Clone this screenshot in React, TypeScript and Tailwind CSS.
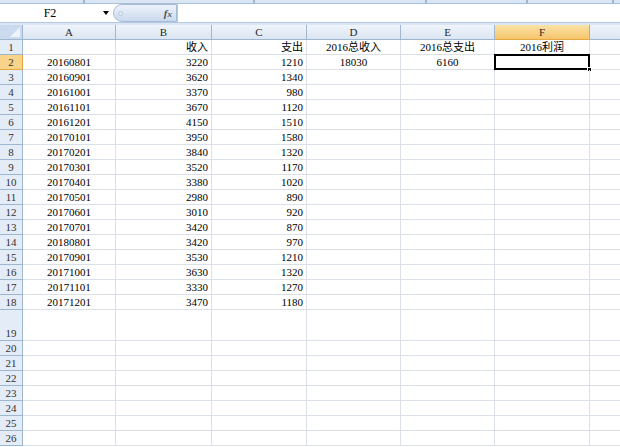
import React from 'react';

const cols = [
  { key: 'A', w: 'w-[93px]' },
  { key: 'B', w: 'w-[96px]' },
  { key: 'C', w: 'w-[95px]' },
  { key: 'D', w: 'w-[94px]' },
  { key: 'E', w: 'w-[94px]' },
  { key: 'F', w: 'w-[95px]' },
];

const data: string[][] = [
  ['', '收入', '支出', '2016总收入', '2016总支出', '2016利润'],
  ['20160801', '3220', '1210', '18030', '6160', ''],
  ['20160901', '3620', '1340'],
  ['20161001', '3370', '980'],
  ['20161101', '3670', '1120'],
  ['20161201', '4150', '1510'],
  ['20170101', '3950', '1580'],
  ['20170201', '3840', '1320'],
  ['20170301', '3520', '1170'],
  ['20170401', '3380', '1020'],
  ['20170501', '2980', '890'],
  ['20170601', '3010', '920'],
  ['20170701', '3420', '870'],
  ['20180801', '3420', '970'],
  ['20170901', '3530', '1210'],
  ['20171001', '3630', '1320'],
  ['20171101', '3330', '1270'],
  ['20171201', '3470', '1180'],
];

const font = { fontFamily: '"Liberation Serif", "Noto Sans CJK SC", serif' };

// B and C columns are right aligned, the rest centred
const align = ['justify-center', 'justify-end pr-[3px]', 'justify-end pr-[3px]', 'justify-center', 'justify-center', 'justify-center'];

const App: React.FC = () => {
  const rows = Array.from({ length: 26 }, (_, i) => i + 1);

  return (
    <div className="w-[620px] h-[447px] overflow-hidden bg-white text-[11px] text-black" style={font}>
      {/* ribbon remnants */}
      <div className="flex h-[4px] bg-[#dbe6f4] border-b border-[#a9bfd6]">
        <div className="w-[85px] border-r-2 border-[#9fb6cf]" />
        <div className="w-[170px] border-r-2 border-[#9fb6cf]" />
        <div className="w-[172px] border-r-2 border-[#9fb6cf]" />
        <div className="w-[101px] border-r-2 border-[#9fb6cf]" />
        <div className="w-[86px] border-r-2 border-[#9fb6cf]" />
      </div>

      {/* formula bar */}
      <div className="flex h-[19px] bg-white border-b border-[#b6c9e0]">
        <div className="relative flex w-[113px] items-center">
          <span className="w-[100px] text-center text-[12px]">F2</span>
          <span className="absolute left-[103px] top-[7px] h-0 w-0 border-x-[3px] border-t-[4px] border-x-transparent border-t-black" />
        </div>
        <div className="flex w-[64px] items-center justify-between rounded-l-full bg-gradient-to-b from-[#eef3fa] to-[#c9d9ee] border border-[#a5bcd9] pl-[4px] pr-[4px]">
          <span className="h-[5px] w-[5px] rounded-full border border-[#b5c6dc] bg-[#e9eef5]" />
          <span className="italic font-bold text-[11px] text-[#555]">f<span className="text-[9px]">x</span></span>
        </div>
        <div className="flex-1 border-l border-[#b6c9e0]" />
      </div>

      <div className="h-[2px] bg-[#dbe6f4]" />

      {/* column headers */}
      <div className="flex h-[15px]">
        <div className="relative w-[23px] border-r border-b border-[#9eb6ce] bg-[#cbdaee]">
          <svg className="absolute right-[2px] bottom-[2px]" width="10" height="10" viewBox="0 0 10 10">
            <polygon points="10,0 10,10 0,10" fill="#eef3fa" />
          </svg>
        </div>
        {cols.map((c) => (
          <div
            key={c.key}
            className={`${c.w} flex items-center justify-center border-r border-b leading-none ${
              c.key === 'F'
                ? 'bg-gradient-to-b from-[#fae2a6] to-[#f5c56b] border-[#e6a73f]'
                : 'bg-gradient-to-b from-[#f0f4fa] to-[#dbe5f2] border-[#9eb6ce]'
            } text-[#2a2a2a]`}
          >
            {c.key}
          </div>
        ))}
        <div className="flex-1 border-b border-[#9eb6ce] bg-gradient-to-b from-[#f0f4fa] to-[#dbe5f2]" />
      </div>

      {/* rows */}
      {rows.map((r) => {
        const cells = data[r - 1] ?? [];
        const tall = r === 19;
        return (
          <div key={r} className={`flex ${tall ? 'h-[31px]' : 'h-[15px]'}`}>
            <div
              className={`w-[23px] flex items-end justify-center border-r border-b leading-[14px] text-[#333] ${
                r === 2 ? 'bg-[#f8d38a] border-[#e6a73f]' : 'bg-[#e4ecf7] border-[#9eb6ce]'
              }`}
            >
              {r}
            </div>
            {cols.map((c, ci) => {
              const selected = r === 2 && c.key === 'F';
              return (
                <div
                  key={c.key}
                  className={`${c.w} relative flex items-end ${align[ci]} border-r border-b border-[#dadfe8] leading-[14px] whitespace-nowrap`}
                >
                  {cells[ci] ?? ''}
                  {selected && (
                    <>
                      <span className="absolute left-[-1px] top-[-1px] right-[-1px] bottom-[-1px] border-2 border-black" />
                      <span className="absolute right-[-3px] bottom-[-3px] h-[5px] w-[5px] bg-black border border-white" />
                    </>
                  )}
                </div>
              );
            })}
            <div className="flex-1 border-b border-[#dadfe8]" />
          </div>
        );
      })}
    </div>
  );
};

export default App;
